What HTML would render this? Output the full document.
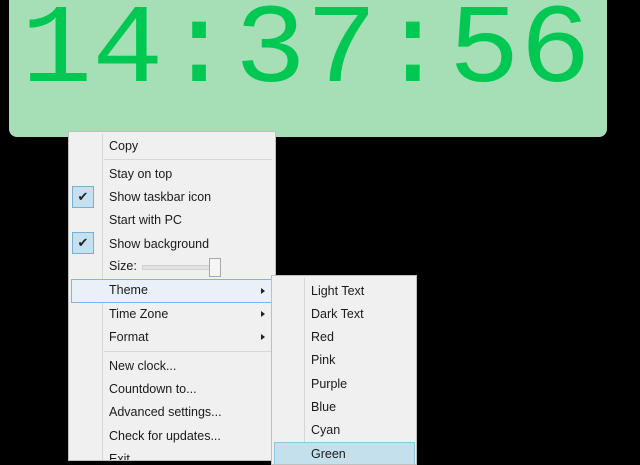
<!DOCTYPE html>
<html><head><style>
body{margin:0;width:640px;height:455px;background:#000;overflow:hidden;position:relative;font-family:"Liberation Sans",sans-serif}
#clock{position:absolute;left:9px;top:-10px;width:598px;height:147px;background:#a6deb6;border-radius:8px}
#time{position:absolute;left:12px;top:6px;font-family:"Liberation Mono",monospace;font-size:112px;color:#00c853;line-height:112px;white-space:nowrap;transform:scaleX(1.06);transform-origin:0 0}
.menu{position:absolute;background:#f0f0f0;border:1px solid #bfbfbf;box-sizing:border-box;overflow:hidden}
.gut{position:absolute;top:2px;bottom:0;width:1px;background:#d7d7d7}
.it{position:absolute;left:0;right:0;height:23px;font-size:12.5px;color:#1a1a1a;line-height:23px}
.it span{position:absolute}
.sep{position:absolute;height:1px;background:#d7d7d7}
.hl{position:absolute;background:#e8f1f8;border:1px solid #7eb4ea;box-sizing:border-box}
.hl2{position:absolute;background:#c4e0ec;border:1px solid #8cc6e0;box-sizing:border-box}
.chk{position:absolute;left:3px;width:22px;height:22px;background:#c5e1ef;border:1px solid #7aaed0;box-sizing:border-box;font-size:13px;text-align:center;line-height:20px;color:#222}
.arr{position:absolute;width:0;height:0;border-left:4px solid #222;border-top:3.5px solid transparent;border-bottom:3.5px solid transparent}
</style></head><body>
<div id="clock"><div id="time">14:37:56</div></div>

<div class="menu" style="left:68px;top:131px;width:208px;height:330px">
<div class="gut" style="left:33px"></div>
<div class="hl" style="left:2px;top:147px;width:204px;height:24px"></div>
<div class="sep" style="left:35px;right:3px;top:27px"></div>
<div class="sep" style="left:35px;right:3px;top:219px"></div>
<div class="chk" style="top:54px">✔</div>
<div class="chk" style="top:100px">✔</div>
<div class="it" style="top:3px"><span style="left:40px">Copy</span></div>
<div class="it" style="top:31px"><span style="left:40px">Stay on top</span></div>
<div class="it" style="top:54px"><span style="left:40px">Show taskbar icon</span></div>
<div class="it" style="top:77px"><span style="left:40px">Start with PC</span></div>
<div class="it" style="top:101px"><span style="left:40px">Show background</span></div>
<div class="it" style="top:123px"><span style="left:40px">Size:</span></div>
<div style="position:absolute;left:73px;top:133px;width:75px;height:3px;background:#e2e2e2;border:1px solid #d0d0d0"></div>
<div style="position:absolute;left:140px;top:126px;width:10px;height:17px;background:#f5f5f5;border:1px solid #a8a8a8"></div>
<div class="it" style="top:147px"><span style="left:40px">Theme</span></div>
<div class="it" style="top:171px"><span style="left:40px">Time Zone</span></div>
<div class="it" style="top:194px"><span style="left:40px">Format</span></div>
<div class="arr" style="left:192px;top:156px"></div>
<div class="arr" style="left:192px;top:179px"></div>
<div class="arr" style="left:192px;top:202px"></div>
<div class="it" style="top:223px"><span style="left:40px">New clock...</span></div>
<div class="it" style="top:246px"><span style="left:40px">Countdown to...</span></div>
<div class="it" style="top:269px"><span style="left:40px">Advanced settings...</span></div>
<div class="it" style="top:293px"><span style="left:40px">Check for updates...</span></div>
<div class="it" style="top:316px"><span style="left:40px">Exit</span></div>
</div>

<div class="menu" style="left:271px;top:275px;width:146px;height:190px">
<div class="gut" style="left:32px"></div>
<div class="hl2" style="left:2px;top:166px;width:141px;height:24px"></div>
<div class="it" style="top:4px"><span style="left:39px">Light Text</span></div>
<div class="it" style="top:27px"><span style="left:39px">Dark Text</span></div>
<div class="it" style="top:50px"><span style="left:39px">Red</span></div>
<div class="it" style="top:73px"><span style="left:39px">Pink</span></div>
<div class="it" style="top:97px"><span style="left:39px">Purple</span></div>
<div class="it" style="top:120px"><span style="left:39px">Blue</span></div>
<div class="it" style="top:143px"><span style="left:39px">Cyan</span></div>
<div class="it" style="top:167px"><span style="left:39px">Green</span></div>
</div>
</body></html>
